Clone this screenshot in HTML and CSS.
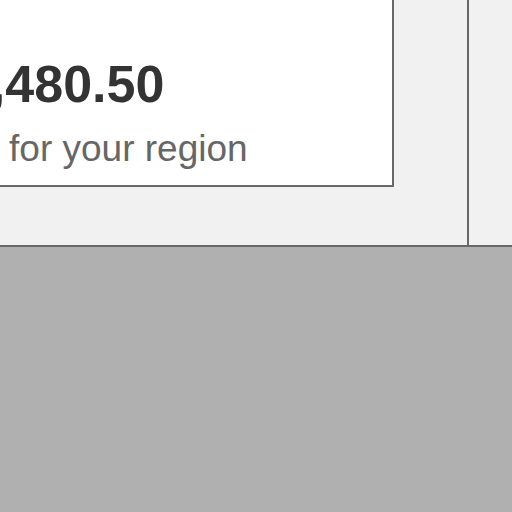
FILE: index.html
```html
<!DOCTYPE html>
<html>
<head>
<meta charset="utf-8">
<link rel="stylesheet" href="styles.css">
</head>
<body>
<div class="page">
  <div class="top">
    <main class="main">
      <section class="card">
        <div class="price">$1,480.50</div>
        <div class="note">Est. for your region</div>
      </section>
    </main>
    <aside class="side"></aside>
  </div>
  <div class="bottom"></div>
</div>
</body>
</html>
```

FILE: styles.css
```css
html, body {
  margin: 0;
  padding: 0;
  overflow: hidden;
}
body {
  width: 512px;
  height: 512px;
  font-family: "Liberation Sans", Arial, sans-serif;
  background: #b0b0b0;
}
.page {
  display: flex;
  flex-direction: column;
  height: 512px;
}
.top {
  display: flex;
  height: 247px;
  box-sizing: border-box;
  border-bottom: 2px solid #686868;
  background: #f1f1f1;
  overflow: hidden;
}
.main {
  width: 469px;
  flex: none;
  box-sizing: border-box;
  border-right: 2px solid #686868;
  padding-right: 73px;
}
.card {
  margin-top: -60px;
  margin-left: -120px;
  background: #ffffff;
  border: 2px solid #686868;
  padding: 116px 0 18px 51px;
}
.price {
  font-size: 52px;
  line-height: 52px;
  font-weight: bold;
  color: #333333;
  white-space: nowrap;
}
.note {
  margin-top: 20px;
  margin-left: 2px;
  font-size: 37px;
  line-height: 37px;
  color: #666666;
  white-space: nowrap;
}
.side {
  flex: 1;
}
.bottom {
  flex: 1;
  background: #b0b0b0;
}
```
